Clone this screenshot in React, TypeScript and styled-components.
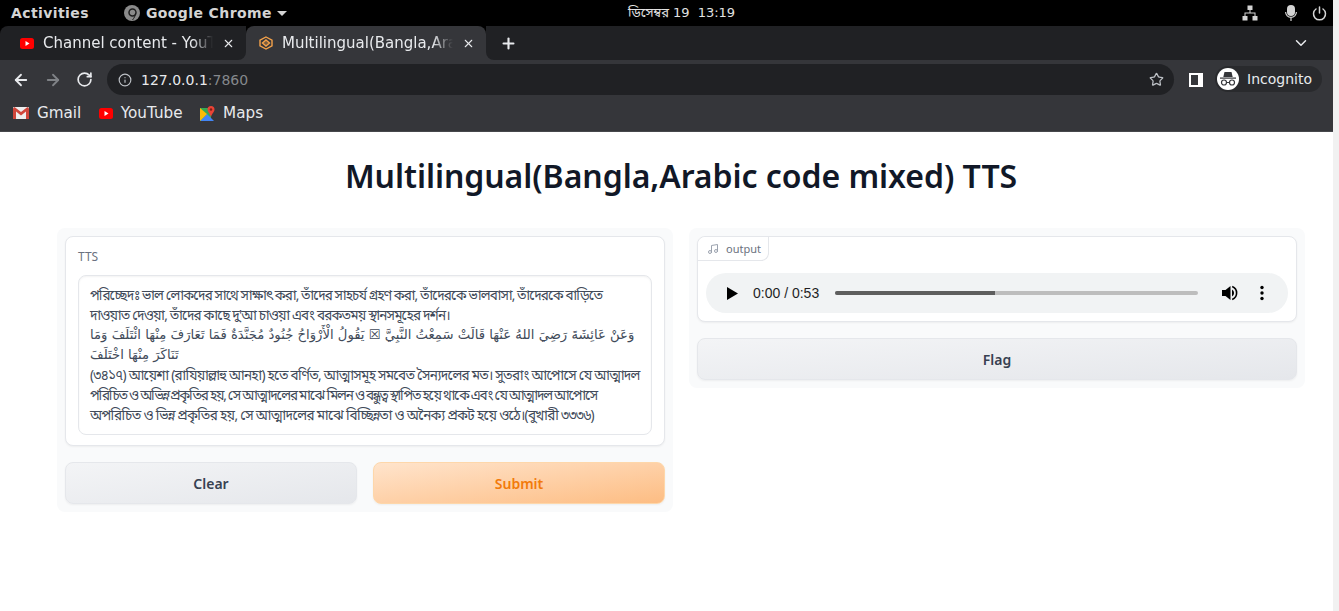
import styled, { createGlobalStyle } from 'styled-components'
import { ArrowLeft, ArrowRight, ChevronDown, Info, Music, Plus, RotateCw, Star, X } from 'lucide-react'

const GlobalStyle = createGlobalStyle`
  html, body { margin: 0; padding: 0; height: 100%; overflow: hidden; background: #fff; }
  * { box-sizing: border-box; }
`

const Screen = styled.div`
  width: 1339px;
  height: 611px;
  display: flex;
  font-family: "DejaVu Sans", sans-serif;
`

const Window = styled.div`
  flex: 1;
  min-width: 0;
  display: flex;
  flex-direction: column;
`

const Gutter = styled.div`
  width: 6px;
  background: #f1f1f1;
`

const OsBar = styled.header`
  height: 26px;
  background: #000;
  color: #d4d4d4;
  display: flex;
  align-items: center;
  padding: 0 6px 0 11px;
  font-size: 14px;
`

const OsLeft = styled.div`
  width: 617px;
  display: flex;
  align-items: center;
  gap: 35px;
  font-weight: 700;
  letter-spacing: 0.4px;
`

const AppName = styled.div`
  display: flex;
  align-items: center;
  gap: 6px;
`

const Clock = styled.div`
  font-size: 13px;
  color: #e2e2e2;
  display: flex;
  gap: 8px;
  font-family: "DejaVu Sans", "Noto Sans Bengali", sans-serif;
`

const OsRight = styled.div`
  flex: 1;
  display: flex;
  justify-content: flex-end;
  align-items: center;
  gap: 15px;
`

const NetworkSlot = styled.span`
  display: flex;
  margin-right: 12px;
`

const Caret = styled.span`
  width: 0;
  height: 0;
  margin-left: -1px;
  border-left: 5px solid transparent;
  border-right: 5px solid transparent;
  border-top: 5px solid #d4d4d4;
`

const TabStrip = styled.div`
  height: 34px;
  background: linear-gradient(to bottom, #000 50%, #35363a 50%);
  display: flex;
  align-items: center;
  color: #e8eaed;
`

const Tab = styled.div<{ $active?: boolean }>`
  width: ${({ $active }) => ($active ? '240px' : '246px')};
  height: 34px;
  display: flex;
  align-items: center;
  gap: 9px;
  padding-left: ${({ $active }) => ($active ? '13px' : '20px')};
  font-size: 15px;
  background: ${({ $active }) => ($active ? '#35363a' : '#202124')};
  border-radius: ${({ $active }) => ($active ? '8px 8px 0 0' : '8px 0 8px 0')};
`

const TabTitle = styled.span`
  flex: 1;
  white-space: nowrap;
  overflow: hidden;
  -webkit-mask-image: linear-gradient(to right, #000 88%, transparent);
  mask-image: linear-gradient(to right, #000 88%, transparent);
`

const TabClose = styled(X)`
  width: 13px;
  height: 13px;
  margin-right: 11px;
  flex: none;
`

const StripRest = styled.div`
  flex: 1;
  height: 34px;
  display: flex;
  align-items: center;
  justify-content: space-between;
  background: #202124;
  border-radius: 0 0 0 8px;
  padding: 0 23px 0 14px;
`

const NewTab = styled(Plus)`
  width: 17px;
  height: 17px;
`

const TabMenu = styled(ChevronDown)`
  width: 18px;
  height: 18px;
`

const Toolbar = styled.div`
  height: 38px;
  background: #35363a;
  display: flex;
  align-items: flex-end;
  padding: 0 11px 3px 12px;
  color: #e8eaed;
`

const NavGroup = styled.div`
  height: 31px;
  display: flex;
  align-items: center;
  gap: 14px;
  margin-right: 14px;
`

const Omnibox = styled.div`
  flex: 1;
  height: 31px;
  background: #202124;
  border-radius: 16px;
  display: flex;
  align-items: center;
  padding: 0 10px 0 11px;
  font-size: 14px;
  gap: 9px;
`

const Port = styled.span`
  color: #85888c;
`

const StarIcon = styled(Star)`
  margin-left: auto;
`

const SidePanelIcon = styled.span`
  width: 14px;
  height: 14px;
  margin: 0 12px 8px 15px;
  background: linear-gradient(to right, #35363a 0 7px, #fff 7px);
  border: 2px solid #fff;
  flex: none;
`

const IncognitoPill = styled.div`
  height: 26px;
  width: 107px;
  margin-bottom: 3px;
  background: #292a2d;
  border-radius: 13px;
  display: flex;
  align-items: center;
  gap: 8px;
  padding-left: 2px;
  font-size: 14px;
`

const IncognitoBadge = styled.span`
  width: 22px;
  height: 22px;
  background: #fff;
  border-radius: 50%;
  display: flex;
  align-items: center;
  justify-content: center;
  flex: none;
`

const Bookmarks = styled.nav`
  height: 34px;
  background: #35363a;
  border-bottom: 1px solid #47484c;
  display: flex;
  align-items: center;
  padding: 0 0 3px 13px;
  gap: 17.500px;
  color: #e8eaed;
  font-size: 15.200px;
`

const Bookmark = styled.div`
  display: flex;
  align-items: center;
  gap: 8px;
`

const Page = styled.main`
  flex: 1;
  min-height: 0;
  padding: 23px 0 0 57px;
  font-family: "Noto Sans", sans-serif;
`

const Title = styled.h1`
  width: 1248px;
  margin: 0 0 32px;
  height: 41px;
  line-height: 41px;
  text-align: center;
  font-size: 32px;
  font-weight: 600;
  letter-spacing: -0.05px;
  color: #111827;
`

const Columns = styled.div`
  width: 1248px;
  display: grid;
  grid-template-columns: minmax(0, 1fr) minmax(0, 1fr);
  align-items: start;
  gap: 16px;
`

const Panel = styled.section`
  min-width: 0;
  background: #f9fafb;
  border-radius: 8px;
  padding: 8px;
  display: flex;
  flex-direction: column;
  gap: 16px;
`

const Block = styled.div`
  background: #fff;
  border: 1px solid #e5e7eb;
  border-radius: 8px;
  box-shadow: 0 1px 2px rgba(0, 0, 0, 0.05);
`

const InputBlock = styled(Block)`
  padding: 12px 12px 10px;
`

const FieldLabel = styled.div`
  font-size: 12px;
  line-height: 16px;
  color: #6b7280;
  margin-bottom: 10px;
`

const TextBox = styled.div`
  height: 160px;
  border: 1px solid #e5e7eb;
  border-radius: 8px;
  box-shadow: inset 0 1px 2px rgba(0, 0, 0, 0.05);
  padding: 9px 11px;
  color: #414a59;
  font-family: "Noto Sans", "Noto Sans Bengali", "Lohit Bengali", "DejaVu Sans", sans-serif;
  overflow: hidden;
`

const BanglaLine = styled.div<{ $tracking: number }>`
  height: 20px;
  line-height: 20px;
  white-space: nowrap;
  font-size: 13.500px;
  letter-spacing: ${({ $tracking }) => $tracking}px;
`

const ArabicLine = styled.div`
  height: 20px;
  line-height: 20px;
  white-space: nowrap;
  text-align: left;
  font-size: 13.200px;
  font-family: "DejaVu Sans", sans-serif;
`

const ButtonRow = styled.div`
  display: flex;
  gap: 16px;
`

const Button = styled.button<{ $primary?: boolean }>`
  flex: 1;
  height: 42px;
  border-radius: 8px;
  font-family: "Noto Sans", sans-serif;
  font-size: 14px;
  font-weight: 600;
  border: 1px solid ${({ $primary }) => ($primary ? '#fed7aa' : '#e5e7eb')};
  color: ${({ $primary }) => ($primary ? '#f27a0a' : '#374151')};
  background: ${({ $primary }) =>
    $primary
      ? 'linear-gradient(to bottom right, #ffe4cc, #fdbd83)'
      : 'linear-gradient(to bottom right, #f3f4f6, #e5e7eb)'};
  box-shadow: 0 1px 2px rgba(0, 0, 0, 0.05);
`

const FlagButton = styled(Button)`
  flex: none;
`

const AudioBlock = styled(Block)`
  position: relative;
  height: 86px;
  padding: 36px 8px 0;
`

const OutputTag = styled.div`
  position: absolute;
  top: 0;
  left: 0;
  width: 71px;
  height: 24px;
  display: flex;
  align-items: center;
  gap: 7px;
  padding-left: 9px;
  background: #fff;
  border-right: 1px solid #e5e7eb;
  border-bottom: 1px solid #e5e7eb;
  border-radius: 8px 0 8px 0;
  font-size: 11px;
  color: #6b7280;
`

const Player = styled.div`
  height: 40px;
  background: #f1f3f4;
  border-radius: 20px;
  display: flex;
  align-items: center;
  padding: 0 24px 0 21px;
  font-family: "Liberation Sans", sans-serif;
  font-size: 14px;
  color: #1f1f1f;
`

const TimeLabel = styled.span`
  margin: 0 16px 0 15px;
  white-space: nowrap;
`

const Track = styled.div`
  flex: 1;
  height: 4px;
  border-radius: 2px;
  background: #bdbdbd;
  overflow: hidden;
`

const TrackFill = styled.div`
  height: 100%;
  background: #5e5e5e;
`

const VolumeSlot = styled.span`
  display: flex;
  margin: 0 21px 0 24px;
`

const YouTubeIcon = () => (
  <svg width="14" height="11" viewBox="0 0 14 11">
    <rect width="14" height="11" rx="2.500" fill="#f00" />
    <path d="M5.500 3l4 2.500-4 2.500z" fill="#fff" />
  </svg>
)

const GradioIcon = () => (
  <svg width="14" height="14" viewBox="0 0 14 14" fill="none" stroke="#f5a24a" strokeWidth="1.400">
    <path d="M7 1l6 3.200v5.600L7 13 1 9.800V4.200z" />
    <path d="M7 4l3.500 3L7 10 3.500 7z" fill="#f5a24a" fillOpacity="0.35" />
  </svg>
)

const GmailIcon = () => (
  <svg width="16" height="12" viewBox="0 0 16 12">
    <rect width="16" height="12" rx="1" fill="#eeeeee" />
    <path d="M0 1.500V12h3V4.500l5 4 5-4V12h3V1.500L14.500 0 8 5 1.500 0z" fill="#d0463b" />
  </svg>
)

const MapsIcon = () => (
  <svg width="15" height="15" viewBox="0 0 15 15">
    <path d="M0 2h11v13H0z" fill="#35a853" />
    <path d="M0 15l7-7 7 7z" fill="#4285f4" />
    <path d="M0 2l7 6-7 7z" fill="#fbbc04" />
    <path d="M11 0a3.500 3.500 0 0 1 3.500 3.500C14.500 6 11.500 8 11 11c-.5-3-3.500-5-3.500-7.500A3.500 3.500 0 0 1 11 0z" fill="#ea4335" />
    <circle cx="11" cy="3.500" r="1.200" fill="#7d1f18" />
  </svg>
)

const ChromeIcon = () => (
  <svg width="16" height="16" viewBox="0 0 16 16">
    <circle cx="8" cy="8" r="8" fill="#8a8a8a" />
    <circle cx="8.500" cy="7.500" r="3.500" fill="none" stroke="#1d1d1d" strokeWidth="1.500" />
    <path d="M11.500 8c0 3-1.500 5-3 7" fill="none" stroke="#1d1d1d" strokeWidth="1" />
  </svg>
)

const NetworkIcon = () => (
  <svg width="16" height="16" viewBox="0 0 16 16" fill="#d4d4d4">
    <rect x="5.500" y="0.500" width="5" height="4.500" />
    <rect x="0.500" y="11" width="5" height="4.500" />
    <rect x="10.500" y="11" width="5" height="4.500" />
    <path d="M7.500 5h1V7.500H13.500V11h-1V8.500h-9V11h-1V7.500H7.500z" />
  </svg>
)

const MicIcon = () => (
  <svg width="12" height="16" viewBox="0 0 12 16">
    <rect x="2" y="0" width="8" height="11" rx="4" fill="#d4d4d4" />
    <path d="M.6 7a5.400 5.400 0 0 0 10.800 0M6 12.500V16" fill="none" stroke="#d4d4d4" strokeWidth="1.200" />
  </svg>
)

const PowerIcon = () => (
  <svg width="15" height="15" viewBox="0 0 15 15" fill="none" stroke="#d4d4d4" strokeWidth="1.500" strokeLinecap="round">
    <path d="M7.500 1v6" />
    <path d="M4 3a6 6 0 1 0 7 0" />
  </svg>
)

const IncognitoIcon = () => (
  <svg width="18" height="16" viewBox="0 0 18 16" fill="#35363a">
    <path d="M5.500 1h7l1.200 5H4.300z" />
    <rect x="1" y="6.500" width="16" height="1.200" />
    <circle cx="5" cy="11.500" r="2.500" fill="none" stroke="#35363a" strokeWidth="1.200" />
    <circle cx="13" cy="11.500" r="2.500" fill="none" stroke="#35363a" strokeWidth="1.200" />
    <rect x="7.500" y="11" width="3" height="1" />
  </svg>
)

const PlayIcon = () => (
  <svg width="11" height="13" viewBox="0 0 11 13">
    <path d="M0 0l11 6.500L0 13z" fill="#000" />
  </svg>
)

const VolumeIcon = () => (
  <svg width="17" height="16" viewBox="0 0 17 16">
    <path d="M0 5h3.500L8.500 1v14l-5-4H0z" fill="#000" />
    <path d="M10 4.500a4 4 0 0 1 0 7z" fill="#000" />
    <path d="M10.200 1.500a7 7 0 0 1 0 13" fill="none" stroke="#000" strokeWidth="1.600" />
  </svg>
)

const DotsIcon = () => (
  <svg width="4" height="16" viewBox="0 0 4 16" fill="#000">
    <circle cx="2" cy="2.500" r="1.700" />
    <circle cx="2" cy="8" r="1.700" />
    <circle cx="2" cy="13.500" r="1.700" />
  </svg>
)

export default function App() {
  return (
    <Screen>
      <GlobalStyle />
      <Window>
        <OsBar>
          <OsLeft>
            <span>Activities</span>
            <AppName>
              <ChromeIcon />
              Google Chrome
              <Caret />
            </AppName>
          </OsLeft>
          <Clock>
            <span>ডিসেম্বর 19</span>
            <span>13:19</span>
          </Clock>
          <OsRight>
            <NetworkSlot>
              <NetworkIcon />
            </NetworkSlot>
            <MicIcon />
            <PowerIcon />
          </OsRight>
        </OsBar>

        <TabStrip>
          <Tab>
            <YouTubeIcon />
            <TabTitle>Channel content - YouTube Studio</TabTitle>
            <TabClose />
          </Tab>
          <Tab $active>
            <GradioIcon />
            <TabTitle>Multilingual(Bangla,Arabic code mixed) TTS</TabTitle>
            <TabClose />
          </Tab>
          <StripRest>
            <NewTab strokeWidth={3} />
            <TabMenu />
          </StripRest>
        </TabStrip>

        <Toolbar>
          <NavGroup>
            <ArrowLeft size={18} strokeWidth={2.4} />
            <ArrowRight size={18} color="#7f8286" strokeWidth={2.4} />
            <RotateCw size={17} strokeWidth={2.4} />
          </NavGroup>
          <Omnibox>
            <Info size={14} color="#bdc1c6" />
            <div>
              127.0.0.1<Port>:7860</Port>
            </div>
            <StarIcon size={15} color="#bdc1c6" />
          </Omnibox>
          <SidePanelIcon />
          <IncognitoPill>
            <IncognitoBadge>
              <IncognitoIcon />
            </IncognitoBadge>
            Incognito
          </IncognitoPill>
        </Toolbar>

        <Bookmarks>
          <Bookmark>
            <GmailIcon />
            Gmail
          </Bookmark>
          <Bookmark>
            <YouTubeIcon />
            YouTube
          </Bookmark>
          <Bookmark>
            <MapsIcon />
            Maps
          </Bookmark>
        </Bookmarks>

        <Page>
          <Title>Multilingual(Bangla,Arabic code mixed) TTS</Title>
          <Columns>
            <Panel>
              <InputBlock>
                <FieldLabel>TTS</FieldLabel>
                <TextBox>
                  <BanglaLine $tracking={-0.86}>পরিচ্ছেদঃ ভাল লোকদের সাথে সাক্ষাৎ করা, তাঁদের সাহচর্য গ্রহণ করা, তাঁদেরকে ভালবাসা, তাঁদেরকে বাড়িতে</BanglaLine>
                  <BanglaLine $tracking={-0.79}>দাওয়াত দেওয়া, তাঁদের কাছে দু'আ চাওয়া এবং বরকতময় স্থানসমূহের দর্শন।</BanglaLine>
                  <ArabicLine>وَعَنْ عَائِشَةَ رَضِيَ اللهُ عَنْهَا قَالَتْ سَمِعْتُ النَّبِيَّ ☒ يَقُولُ الْأَرْوَاحُ جُنُودٌ مُجَنَّدَةٌ فَمَا تَعَارَفَ مِنْهَا ائْتَلَفَ وَمَا</ArabicLine>
                  <ArabicLine>تَنَاكَرَ مِنْهَا اخْتَلَفَ</ArabicLine>
                  <BanglaLine $tracking={-0.7}>(৩৪১৭) আয়েশা (রাযিয়াল্লাহু আনহা) হতে বর্ণিত, আত্মাসমূহ সমবেত সৈন্যদলের মত। সুতরাং আপোসে যে আত্মাদল</BanglaLine>
                  <BanglaLine $tracking={-1.22}>পরিচিত ও অভিন্ন প্রকৃতির হয়, সে আত্মাদলের মাঝে মিলন ও বন্ধুত্ব স্থাপিত হয়ে থাকে এবং যে আত্মাদল আপোসে</BanglaLine>
                  <BanglaLine $tracking={-0.63}>অপরিচিত ও ভিন্ন প্রকৃতির হয়, সে আত্মাদলের মাঝে বিচ্ছিন্নতা ও অনৈক্য প্রকট হয়ে ওঠে।(বুখারী ৩৩৩৬)</BanglaLine>
                </TextBox>
              </InputBlock>
              <ButtonRow>
                <Button>Clear</Button>
                <Button $primary>Submit</Button>
              </ButtonRow>
            </Panel>
            <Panel>
              <AudioBlock>
                <OutputTag>
                  <Music size={12} color="#9ca3af" />
                  output
                </OutputTag>
                <Player>
                  <PlayIcon />
                  <TimeLabel>0:00 / 0:53</TimeLabel>
                  <Track>
                    <TrackFill style={{ width: '44%' }} />
                  </Track>
                  <VolumeSlot>
                    <VolumeIcon />
                  </VolumeSlot>
                  <DotsIcon />
                </Player>
              </AudioBlock>
              <FlagButton>Flag</FlagButton>
            </Panel>
          </Columns>
        </Page>
      </Window>
      <Gutter />
    </Screen>
  )
}
